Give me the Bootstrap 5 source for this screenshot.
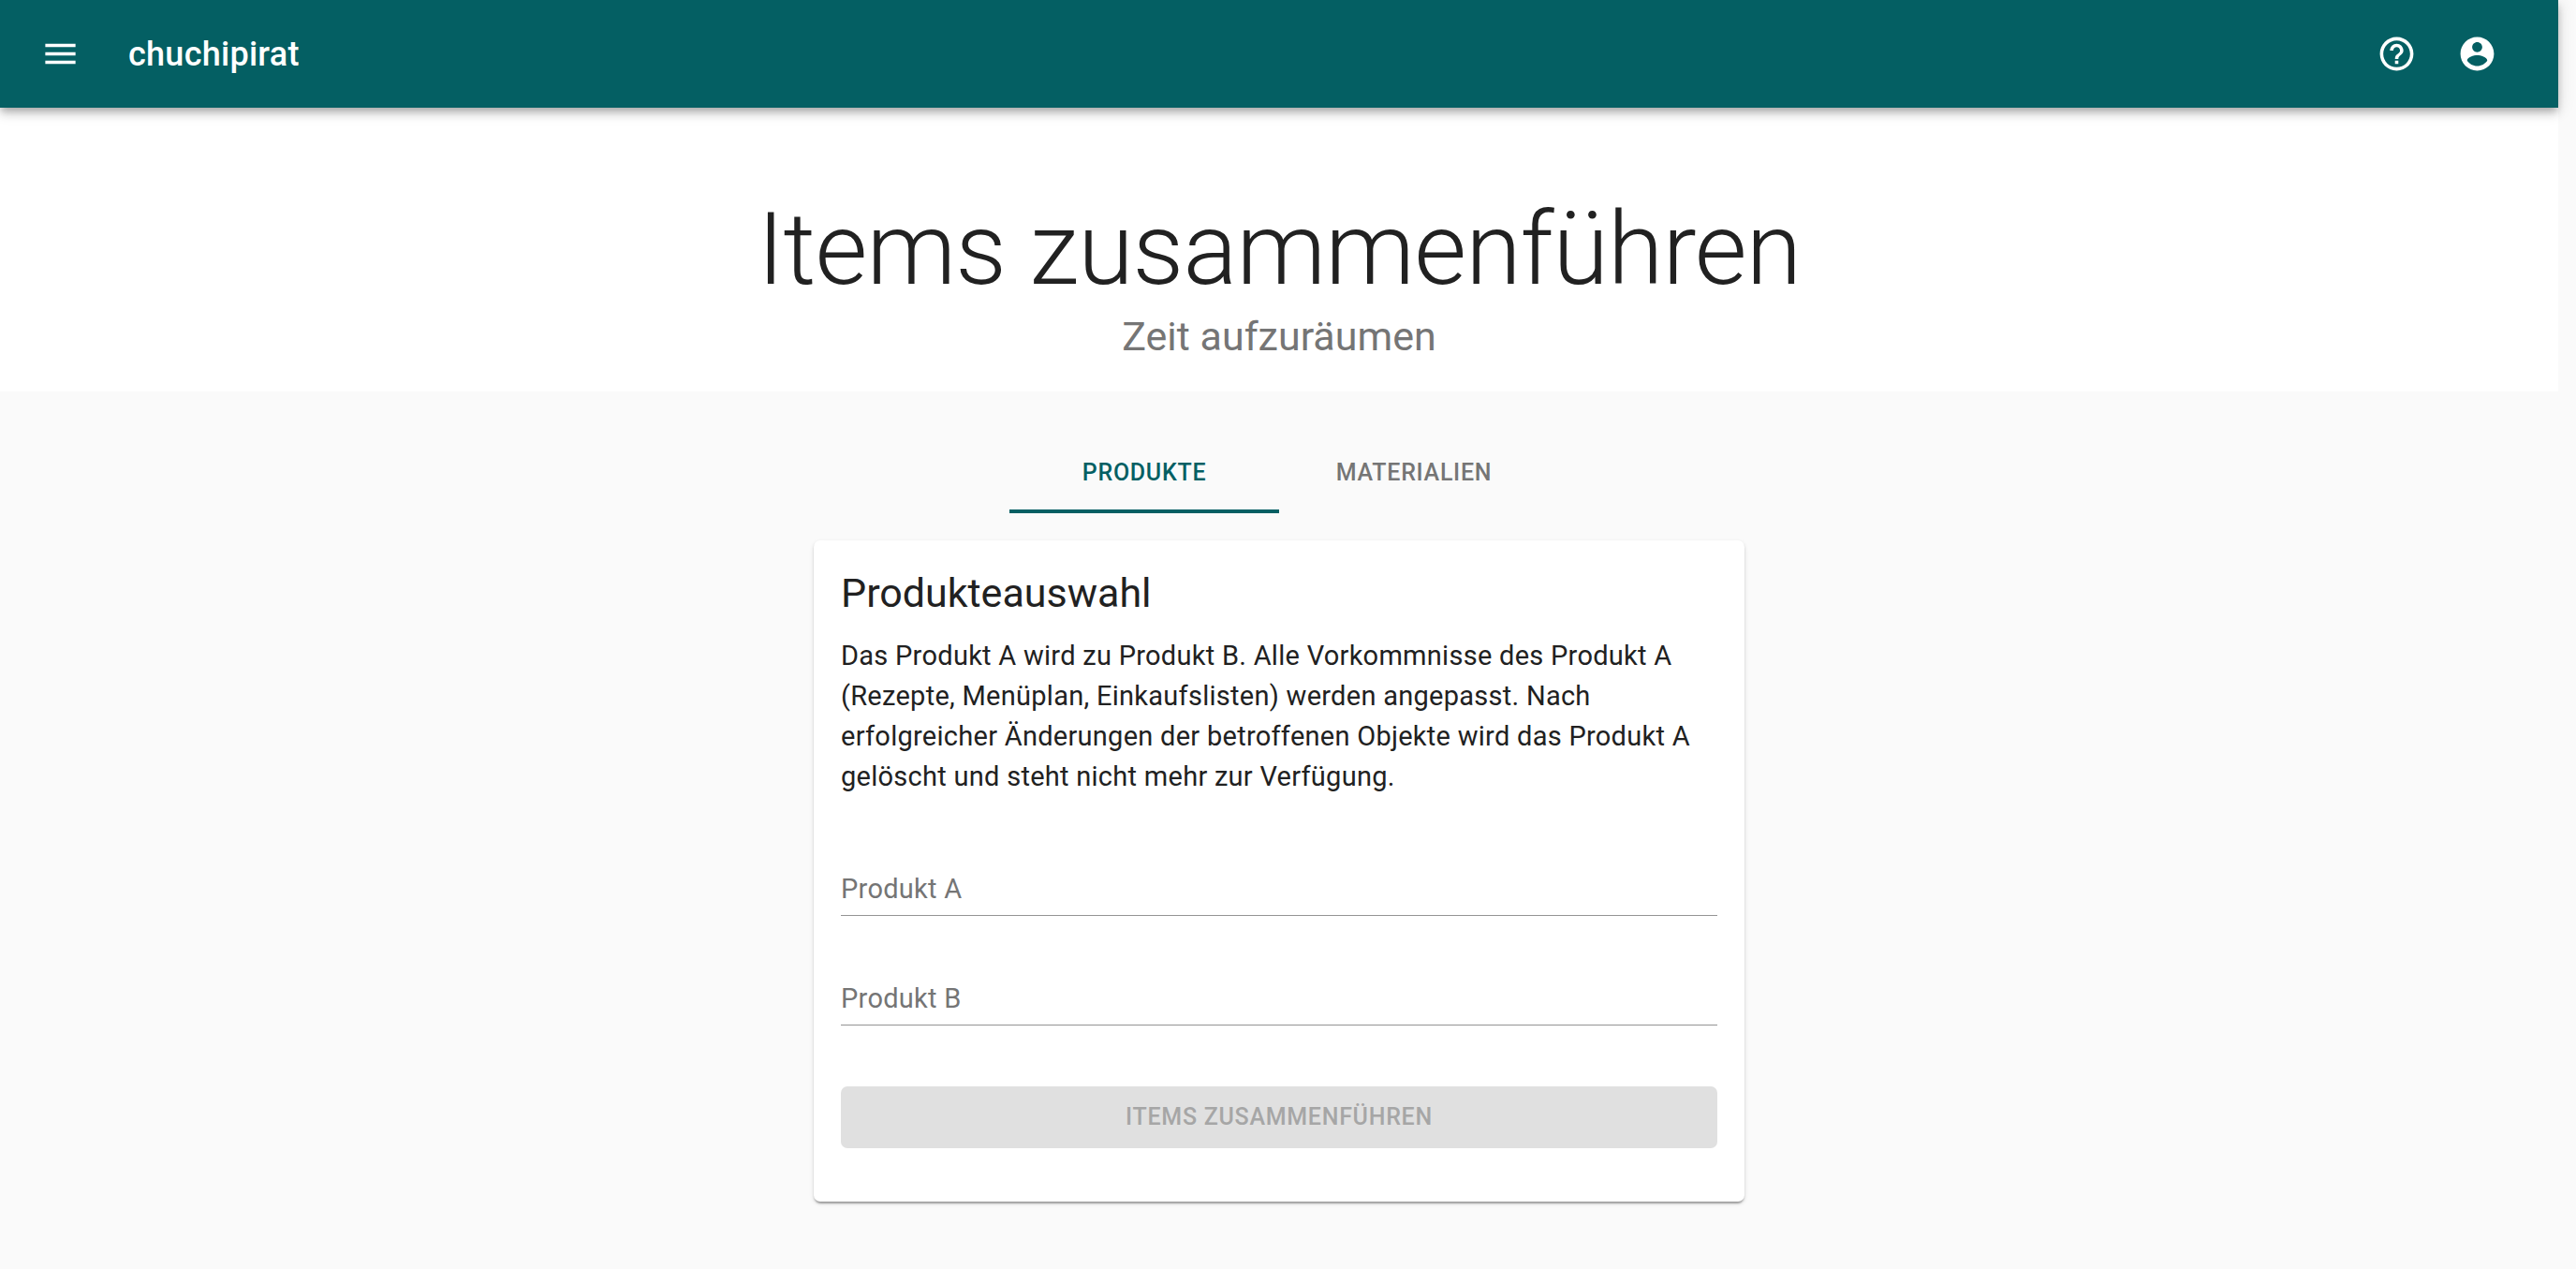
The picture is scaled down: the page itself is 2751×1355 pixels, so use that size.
<!DOCTYPE html>
<html lang="de">
<head>
<meta charset="utf-8">
<meta name="viewport" content="width=device-width, initial-scale=1">
<title>chuchipirat</title>
<link href="https://cdn.jsdelivr.net/npm/bootstrap@5.3.0/dist/css/bootstrap.min.css" rel="stylesheet">
<style>
  :root { --teal: #045f63; --ink: #212121; --muted: #757575; }
  body {
    font-family: Roboto, "Liberation Sans", sans-serif;
    font-size: 29px;
    line-height: 43px;
    letter-spacing: .00938em;
    color: var(--ink);
    background: #fafafa;
    padding-right: 19px;
  }
  .app-bar {
    background: var(--teal);
    min-height: 115px;
    padding: 0 65px 0 43px;
    z-index: 10;
    box-shadow: 0 4px 7px -2px rgba(0,0,0,.2), 0 7px 9px rgba(0,0,0,.14), 0 2px 18px rgba(0,0,0,.12);
  }
  .icon-button { border: 0; padding: 0; background: none; color: #fff; display: flex; }
  .icon-button svg { width: 43px; height: 43px; fill: currentColor; }
  .bar-start { gap: 51px; }
  .bar-end { gap: 43px; }
  .app-name { font-size: 36px; line-height: 58px; font-weight: 500; letter-spacing: .0075em; color: #fff; text-decoration: none; }
  .hero { background: #fff; padding: 86px 43px 31px; }
  .hero-title { font-size: 108px; line-height: 130px; font-weight: 300; letter-spacing: -.00833em; margin: 0; }
  .section-title { font-size: 43px; line-height: 56px; font-weight: 400; letter-spacing: 0; margin: 0; }
  .hero .section-title { color: var(--muted); }
  .page { max-width: 1080px; padding: 43px 43px 70px; }
  .caps { font-size: 25px; line-height: 44px; font-weight: 500; letter-spacing: .02857em; text-transform: uppercase; }
  .tabs .nav-link {
    width: 288px; height: 87px; padding: 4px 0 0; border: 0; border-radius: 0; background: none;
    border-bottom: 4px solid transparent; color: var(--muted);
  }
  .tabs .nav-link.active { color: var(--teal); border-bottom-color: var(--teal); }
  .merge-card {
    margin-top: 29px; border: 0; border-radius: 7px; color: var(--ink);
    box-shadow: 0 4px 2px -2px rgba(0,0,0,.2), 0 2px 2px rgba(0,0,0,.14), 0 2px 5px rgba(0,0,0,.12);
  }
  .merge-card .card-body { padding: 28px 29px 57px; }
  .merge-card .section-title { margin-bottom: 18px; }
  .fields { padding: 69px 0 65px; gap: 59px; }
  .fields .form-control {
    height: 58px; min-height: 58px; padding: 8px 0 7px; border: 0; border-radius: 0;
    border-bottom: 1px solid #949494; font-size: 29px; line-height: 43px; background: none; box-shadow: none;
  }
  .fields label { height: 58px; padding: 8px 0 0; border: 0; color: var(--muted); }
  .fields .form-floating > .form-control:focus { padding: 8px 0 7px; border-color: var(--teal); }
  .fields .form-floating > .form-control:focus ~ label,
  .fields .form-floating > .form-control:not(:placeholder-shown) ~ label { transform: translateY(-36px) scale(.75); color: var(--teal); opacity: 1; }
  .merge-btn, .merge-btn:disabled {
    padding: 11px 29px; border: 0; border-radius: 7px; background: #e0e0e0; color: #a6a6a6; opacity: 1;
  }
</style>
<script src="https://cdn.jsdelivr.net/npm/bootstrap@5.3.0/dist/js/bootstrap.bundle.min.js" defer></script>
</head>
<body>
<header class="app-bar d-flex align-items-center justify-content-between position-relative">
  <div class="bar-start d-flex align-items-center">
    <button class="icon-button" type="button" aria-label="Menü">
      <svg viewBox="0 0 24 24" aria-hidden="true"><path d="M3 18h18v-2H3v2zm0-5h18v-2H3v2zm0-7v2h18V6H3z"/></svg>
    </button>
    <a class="app-name" href="#">chuchipirat</a>
  </div>
  <div class="bar-end d-flex align-items-center">
    <button class="icon-button" type="button" aria-label="Hilfe">
      <svg viewBox="0 0 24 24" aria-hidden="true"><path d="M11 18h2v-2h-2v2zm1-16C6.480 2 2 6.480 2 12s4.480 10 10 10 10-4.480 10-10S17.520 2 12 2zm0 18c-4.410 0-8-3.590-8-8s3.590-8 8-8 8 3.590 8 8-3.590 8-8 8zm0-14c-2.210 0-4 1.790-4 4h2c0-1.100.9-2 2-2s2 .9 2 2c0 2-3 1.750-3 5h2c0-2.250 3-2.500 3-5 0-2.210-1.790-4-4-4z"/></svg>
    </button>
    <button class="icon-button" type="button" aria-label="Konto">
      <svg viewBox="0 0 24 24" aria-hidden="true"><path d="M12 2C6.480 2 2 6.480 2 12s4.480 10 10 10 10-4.480 10-10S17.520 2 12 2zm0 3c1.660 0 3 1.340 3 3s-1.340 3-3 3-3-1.340-3-3 1.340-3 3-3zm0 14.200c-2.500 0-4.710-1.280-6-3.220.03-1.990 4-3.080 6-3.080 1.990 0 5.970 1.090 6 3.080-1.290 1.940-3.500 3.220-6 3.220z"/></svg>
    </button>
  </div>
</header>

<section class="hero text-center">
  <h1 class="hero-title">Items zusammenführen</h1>
  <p class="section-title">Zeit aufzuräumen</p>
</section>

<main class="page container">
  <div class="tabs nav justify-content-center" role="tablist">
    <button class="nav-link caps active" type="button" role="tab" aria-selected="true">Produkte</button>
    <button class="nav-link caps" type="button" role="tab" aria-selected="false">Materialien</button>
  </div>

  <div class="merge-card card">
    <div class="card-body">
      <h2 class="section-title">Produkteauswahl</h2>
      <p class="mb-0">Das Produkt A wird zu Produkt B. Alle Vorkommnisse des Produkt A (Rezepte, Menüplan, Einkaufslisten) werden angepasst. Nach erfolgreicher Änderungen der betroffenen Objekte wird das Produkt A gelöscht und steht nicht mehr zur Verfügung.</p>
      <form>
        <div class="fields d-flex flex-column">
          <div class="form-floating">
            <input class="form-control" type="text" id="produktA" placeholder=" " autocomplete="off">
            <label for="produktA">Produkt A</label>
          </div>
          <div class="form-floating">
            <input class="form-control" type="text" id="produktB" placeholder=" " autocomplete="off">
            <label for="produktB">Produkt B</label>
          </div>
        </div>
        <button class="merge-btn btn caps w-100" type="submit" disabled>Items zusammenführen</button>
      </form>
    </div>
  </div>
</main>
</body>
</html>
